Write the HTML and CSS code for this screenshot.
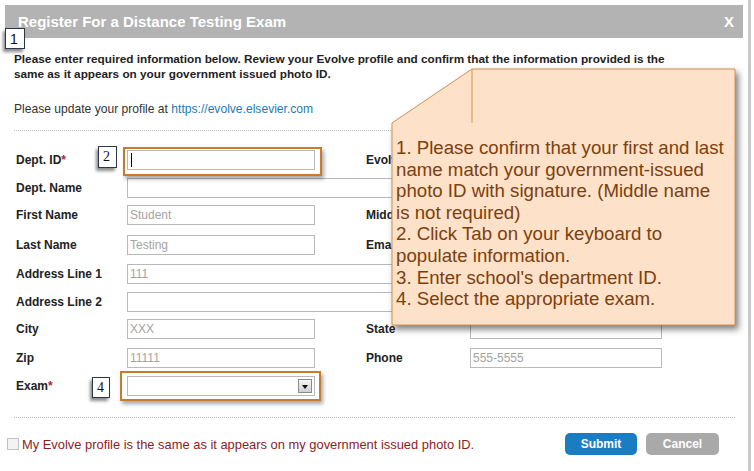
FILE: index.html
```html
<!DOCTYPE html>
<html>
<head>
<meta charset="utf-8">
<link rel="stylesheet" href="styles.css">
</head>
<body>
<div class="page">
  <div class="dialog">
    <div class="header"><span class="title">Register For a Distance Testing Exam</span><span class="close">X</span></div>
    <div class="body">
      <p class="intro">Please enter required information below. Review your Evolve profile and confirm that the information provided is the<br>same as it appears on your government issued photo ID.</p>
      <p class="update">Please update your profile at <a class="link">https://evolve.elsevier.com</a></p>
      <div class="dots"></div>
      <div class="form">
        <span class="lbl c1">Dept. ID<span class="req">*</span></span>
        <div class="field c2"><span class="caret"></span></div>
        <span class="lbl c4">Evolve ID</span>
        <div class="field c5"></div>

        <span class="lbl c1">Dept. Name</span>
        <div class="field wide"></div>

        <span class="lbl c1">First Name</span>
        <div class="field c2">Student</div>
        <span class="lbl c4">Middle Name</span>
        <div class="field c5"></div>

        <span class="lbl c1">Last Name</span>
        <div class="field c2">Testing</div>
        <span class="lbl c4">Email</span>
        <div class="field c5"></div>

        <span class="lbl c1">Address Line 1</span>
        <div class="field wide">111</div>

        <span class="lbl c1">Address Line 2</span>
        <div class="field wide"></div>

        <span class="lbl c1">City</span>
        <div class="field c2">XXX</div>
        <span class="lbl c4">State</span>
        <div class="field c5"></div>

        <span class="lbl c1">Zip</span>
        <div class="field c2">11111</div>
        <span class="lbl c4">Phone</span>
        <div class="field c5">555-5555</div>

        <span class="lbl c1">Exam<span class="req">*</span></span>
        <div class="field c2 select"><span class="arrow"></span></div>
      </div>
      <div class="dots dots2"></div>
      <div class="footer">
        <div class="agree"><span class="checkbox"></span>My Evolve profile is the same as it appears on my government issued photo ID.</div>
        <div class="buttons">
          <span class="btn submit">Submit</span>
          <span class="btn cancel">Cancel</span>
        </div>
      </div>
    </div>
  </div>
  <div class="edge"></div>

  <div class="badge badge1">1</div>
  <div class="hl hl1"></div>
  <div class="badge serif badge2">2</div>
  <div class="hl hl2"></div>
  <div class="badge serif badge4">4</div>

  <svg class="callout" width="358" height="270" viewBox="0 0 358 270">
    <polygon points="84,3 347,3 347,259 4,259 4,57" fill="#fde1c8" stroke="#d4914f" stroke-width="1"/>
    <line x1="84" y1="3" x2="84" y2="57" stroke="#d4914f" stroke-width="1"/>
  </svg>
  <div class="callout-text">1. Please confirm that your first and last<br>name match your government-issued<br>photo ID with signature. (Middle name<br>is not required)<br>2. Click Tab on your keyboard to<br>populate information.<br>3. Enter school's department ID.<br>4. Select the appropriate exam.</div>
</div>
</body>
</html>
```

FILE: styles.css
```css
* { box-sizing: border-box; }
body {
  margin: 0;
  background: #fff;
  font-family: "Liberation Sans", Arial, sans-serif;
  color: #222;
}
.page {
  position: relative;
  width: 754px;
  height: 471px;
  overflow: hidden;
  display: flex;
}
.dialog { width: 748px; }
.edge { width: 3px; background: #c9c9c9; }

.header {
  margin: 5px 0 0 5px;
  width: 738px;
  height: 33px;
  background: #b3b3b3;
  display: flex;
  align-items: center;
  justify-content: space-between;
  padding: 0 9px 0 13px;
  color: #fff;
  font-weight: bold;
  font-size: 15px;
}
.body { padding-left: 14px; }
.intro {
  margin: 13px 0 0;
  font-size: 11.75px;
  font-weight: bold;
  line-height: 15px;
  white-space: nowrap;
  color: #222;
}
.update {
  margin: 21px 0 0;
  font-size: 12.1px;
  line-height: 15px;
  color: #333;
}
.link { color: #1f7ab5; }
.dots {
  margin-top: 13px;
  width: 721px;
  height: 0;
  border-top: 1px dotted #b8b8b8;
}
.form {
  margin: 19px 0 0 2px;
  display: grid;
  grid-template-columns: 111px 188px 51px 104px 192px;
  grid-template-rows: 28px 27px 30px 29px 28px 27px 29px 28px 20px;
  align-items: start;
}
.lbl { font-size: 12px; font-weight: bold; color: #222; line-height: 20px; }
.c1 { grid-column: 1; }
.c2 { grid-column: 2; }
.c4 { grid-column: 4; }
.c5 { grid-column: 5; }
.wide { grid-column: 2 / 6; }
.req { color: #b3262e; }
.field {
  height: 20px;
  border: 1px solid #b9b9b9;
  background: #fff;
  font-size: 12px;
  color: #a3a3a3;
  padding-left: 2px;
  line-height: 18px;
}
.caret {
  display: inline-block;
  width: 1px;
  height: 14px;
  margin: 2px 0 0 1px;
  background: #000;
  vertical-align: top;
}
.select {
  display: flex;
  justify-content: flex-end;
  align-items: center;
  padding-right: 2px;
}
.arrow {
  width: 14px;
  height: 14px;
  border: 1px solid #8a8a8a;
  background: linear-gradient(#f7f7f7, #cfcfcf);
  position: relative;
}
.arrow::after {
  content: "";
  position: absolute;
  left: 3px;
  top: 5px;
  border-left: 3.5px solid transparent;
  border-right: 3.5px solid transparent;
  border-top: 4px solid #111;
}
.dots2 { margin-top: 21px; }
.footer {
  margin-top: 15px;
  display: flex;
  align-items: center;
  justify-content: space-between;
  width: 712px;
  margin-left: -7px;
}
.agree {
  display: flex;
  align-items: center;
  font-size: 12.9px;
  color: #8e1b1f;
  white-space: nowrap;
}
.checkbox {
  width: 12px;
  height: 12px;
  border: 1px solid #c2c2c2;
  background: #f3f3f3;
  margin-right: 3px;
}
.buttons { display: flex; gap: 9px; }
.btn {
  width: 72px;
  height: 22px;
  border-radius: 5px;
  color: #fff;
  font-size: 12px;
  font-weight: bold;
  display: flex;
  align-items: center;
  justify-content: center;
}
.submit { background: #1a7dc2; }
.cancel { background: #a9a9a9; width: 73px; }

/* overlays */
.badge {
  position: absolute;
  background: #fff;
  border: 1px solid #2c3646;
  box-shadow: -2px 3px 3px rgba(0,0,0,0.45);
  font-family: "Liberation Sans", Arial, sans-serif;
  font-size: 14px;
  color: #111;
  line-height: 1;
  padding: 3px 0 0 4px;
}
.serif { font-family: "Liberation Serif", "Times New Roman", serif; font-size: 14px; }
.badge1 { left: 5px; top: 28px; width: 20px; height: 21px; }
.badge2 { left: 98px; top: 146px; width: 19px; height: 22px; }
.badge4 { left: 92px; top: 377px; width: 18px; height: 21px; }
.hl {
  position: absolute;
  border: 2px solid #c67b2f;
  box-shadow: 2px 3px 4px rgba(0,0,0,0.35);
}
.hl1 { left: 123px; top: 147px; width: 199px; height: 29px; }
.hl2 { left: 120px; top: 371px; width: 201px; height: 30px; }
.callout {
  position: absolute;
  left: 388px;
  top: 66px;
  filter: drop-shadow(3px 4px 3px rgba(0,0,0,0.5));
}
.callout-text {
  position: absolute;
  left: 396px;
  top: 137px;
  font-size: 18.67px;
  line-height: 21.6px;
  color: #7c400e;
  white-space: nowrap;
}
```
